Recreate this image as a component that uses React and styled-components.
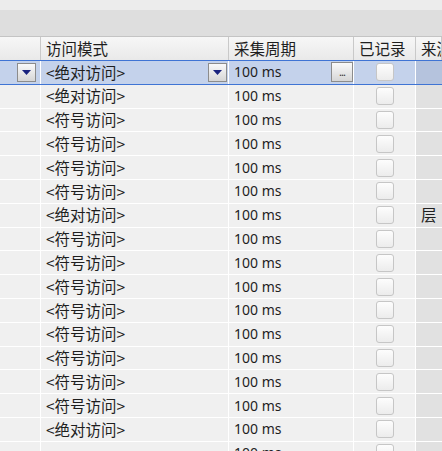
import React from "react";
import styled, { createGlobalStyle } from "styled-components";

const GlobalStyle = createGlobalStyle`
  html, body {
    margin: 0;
    padding: 0;
    width: 442px;
    height: 451px;
    overflow: hidden;
    background: #f0f0f0;
  }
  * { box-sizing: border-box; }
`;

const COLS = [41, 188, 125, 62];

const rows = [
  { mode: "<绝对访问>", cycle: "100 ms", selected: true },
  { mode: "<绝对访问>", cycle: "100 ms" },
  { mode: "<符号访问>", cycle: "100 ms" },
  { mode: "<符号访问>", cycle: "100 ms" },
  { mode: "<符号访问>", cycle: "100 ms" },
  { mode: "<符号访问>", cycle: "100 ms" },
  { mode: "<绝对访问>", cycle: "100 ms", source: "层" },
  { mode: "<符号访问>", cycle: "100 ms" },
  { mode: "<符号访问>", cycle: "100 ms" },
  { mode: "<符号访问>", cycle: "100 ms" },
  { mode: "<符号访问>", cycle: "100 ms" },
  { mode: "<符号访问>", cycle: "100 ms" },
  { mode: "<符号访问>", cycle: "100 ms" },
  { mode: "<符号访问>", cycle: "100 ms" },
  { mode: "<符号访问>", cycle: "100 ms" },
  { mode: "<绝对访问>", cycle: "100 ms" },
  { mode: "", cycle: "100 ms" },
];

export default function App() {
  return (
    <>
      <GlobalStyle />
      <Page>
        <TopStrip />
        <Toolbar />
        <Header>
          <HeadCell $w={COLS[0]} />
          <HeadCell $w={COLS[1]}>访问模式</HeadCell>
          <HeadCell $w={COLS[2]}>采集周期</HeadCell>
          <HeadCell $w={COLS[3]}>已记录</HeadCell>
          <HeadCell $grow>来源</HeadCell>
        </Header>
        <Body>
          {rows.map((r, i) => (
            <Row key={i} $selected={r.selected}>
              <Cell $w={COLS[0]} $end>
                {r.selected && <DropButton />}
              </Cell>
              <Cell $w={COLS[1]}>
                <Text $cjk>{r.mode}</Text>
                {r.selected && <DropButton />}
              </Cell>
              <Cell $w={COLS[2]}>
                <Text>{r.cycle}</Text>
                {r.selected && <DotsButton>...</DotsButton>}
              </Cell>
              <Cell $w={COLS[3]} $center>
                <Check />
              </Cell>
              <SourceCell $selected={r.selected}>
                <Text $cjk>{r.source}</Text>
              </SourceCell>
            </Row>
          ))}
        </Body>
      </Page>
    </>
  );
}

const DropButton = () => (
  <DropBox>
    <svg width="9" height="5" viewBox="0 0 9 5">
      <path d="M0 0 H9 L4.5 5 Z" fill="#1a237e" />
    </svg>
  </DropBox>
);

const Page = styled.div`
  width: 442px;
  height: 451px;
  display: flex;
  flex-direction: column;
  font-family: "Noto Sans", "Noto Sans CJK SC", sans-serif;
  font-size: 14px;
  color: #1e1e1e;
  overflow: hidden;
`;

const TopStrip = styled.div`
  height: 10px;
  flex: none;
  background: #ececec;
`;

const Toolbar = styled.div`
  height: 27px;
  flex: none;
  background: #dedede;
  border-bottom: 1px solid #c4c4c4;
`;

const Header = styled.div`
  height: 23px;
  flex: none;
  display: flex;
  background: linear-gradient(#f7f7f7, #e9e9e9);
`;

const HeadCell = styled.div`
  width: ${(p) => (p.$grow ? "auto" : `${p.$w}px`)};
  flex: ${(p) => (p.$grow ? "1" : "none")};
  border-right: 1px solid #c9c9c9;
  padding-left: 5px;
  display: flex;
  align-items: center;
  font-family: "Noto Sans CJK SC", sans-serif;
  font-size: 15.5px;
  white-space: nowrap;
  overflow: hidden;
  line-height: 1;
`;

const Body = styled.div`
  display: flex;
  flex-direction: column;
`;

const Row = styled.div`
  flex: none;
  display: flex;
  background: ${(p) => (p.$selected ? "#c4d2eb" : "#f0f0f0")};
  border-bottom: 1px solid ${(p) => (p.$selected ? "#3f74d4" : "#ffffff")};
  border-top: ${(p) => (p.$selected ? "1px solid #3f74d4" : "none")};
  height: ${(p) => (p.$selected ? "24.8px" : "23.8px")};
`;

const Cell = styled.div`
  width: ${(p) => p.$w}px;
  flex: none;
  border-right: 1px solid #ffffff;
  padding-left: 5px;
  display: flex;
  align-items: center;
  justify-content: ${(p) => (p.$center ? "center" : p.$end ? "flex-end" : "space-between")};
  padding-right: ${(p) => (p.$center ? "5px" : p.$end ? "3px" : "0")};
  white-space: nowrap;
  overflow: hidden;
`;

const SourceCell = styled.div`
  flex: 1;
  background: ${(p) => (p.$selected ? "#b5c3dd" : "#e1e1e1")};
  padding-left: 5px;
  display: flex;
  align-items: center;
`;

const Text = styled.span`
  font-family: ${(p) => (p.$cjk ? '"Noto Sans CJK SC", sans-serif' : '"Noto Sans", sans-serif')};
  font-size: ${(p) => (p.$cjk ? "15.5px" : "14px")};
  line-height: 1;
`;

const DropBox = styled.div`
  width: 19px;
  height: 19px;
  margin-right: 1px;
  flex: none;
  border: 1px solid #8c8c8c;
  background: linear-gradient(#fafafa, #d6d6d6);
  display: flex;
  align-items: center;
  justify-content: center;
  padding-top: 1px;
`;

const DotsButton = styled.div`
  width: 22px;
  height: 20px;
  flex: none;
  border: 1px solid #8c8c8c;
  background: linear-gradient(#fafafa, #d6d6d6);
  font-size: 11px;
  line-height: 1;
  color: #333;
  display: flex;
  align-items: flex-end;
  justify-content: center;
  padding-bottom: 4px;
  letter-spacing: -1px;
`;

const Check = styled.div`
  width: 18px;
  height: 18px;
  border: 1px solid #c6c6c6;
  border-radius: 3px;
  background: linear-gradient(#fdfdfd, #ececec);
`;
